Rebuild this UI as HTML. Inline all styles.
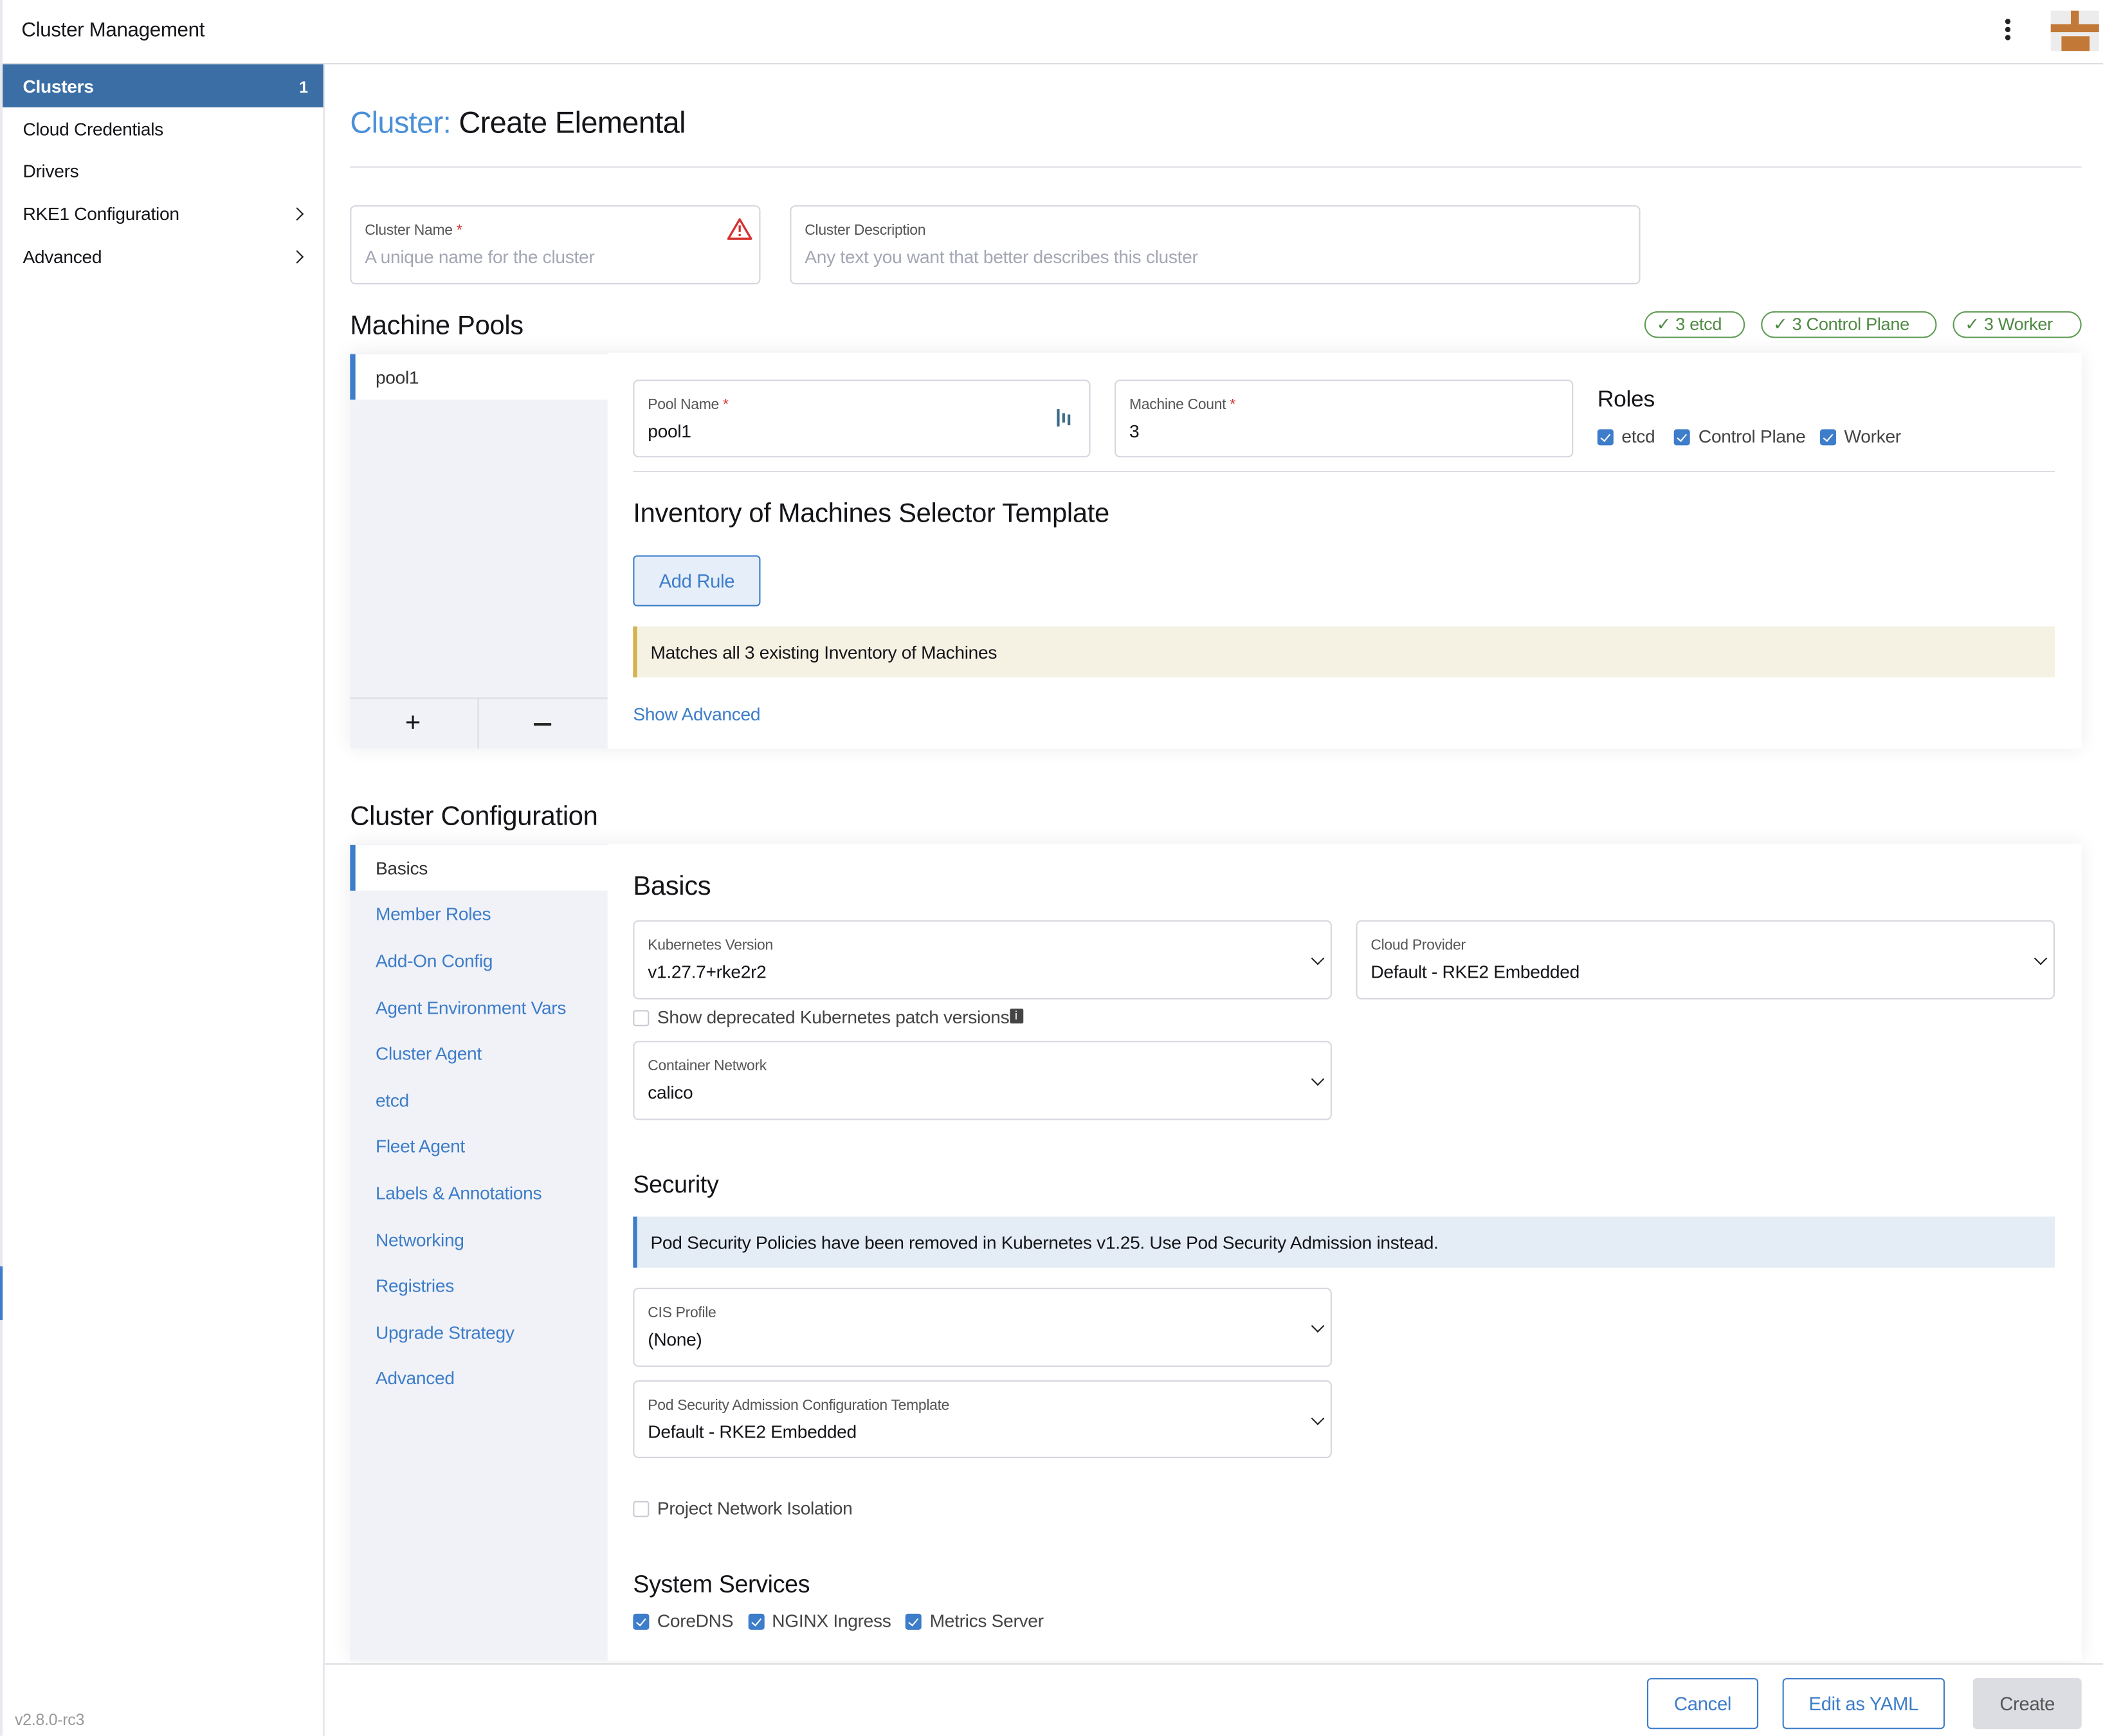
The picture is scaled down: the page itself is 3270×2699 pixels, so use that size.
<!DOCTYPE html>
<html><head><meta charset="utf-8"><style>
*{box-sizing:border-box;margin:0;padding:0}
html,body{width:3270px;height:2698px;overflow:hidden;background:#fff}
#w{position:absolute;left:0;top:0;width:1568px;height:1294px;transform:scale(2.0855);transform-origin:0 0;font-family:"Liberation Sans",sans-serif;color:#141419;font-size:13px;letter-spacing:-0.15px}
.a{position:absolute;white-space:nowrap}
.box{position:absolute;border:1px solid #d5d6de;border-radius:4px;background:#fff}
.lbl{position:absolute;left:10px;top:12px;font-size:11px;color:#555}
.val{position:absolute;left:10px;top:30px;font-size:13.5px}
.ph{color:#a3a6b4}
.req{color:#d63232}
.chev{position:absolute;right:6px;top:24px;width:7px;height:7px;border-right:1.6px solid #222;border-bottom:1.6px solid #222;transform:rotate(45deg)}
.cb{display:inline-block;width:12px;height:12px;border-radius:2px;background:#3d7dca;vertical-align:-2px;margin-right:6px;position:relative}
.cb:after{content:"";position:absolute;left:4px;top:1.5px;width:3px;height:6px;border-right:1.5px solid #fff;border-bottom:1.5px solid #fff;transform:rotate(40deg)}
.cbe{display:inline-block;width:12px;height:12px;border-radius:2px;border:1px solid #c8cad3;vertical-align:-2px;margin-right:6px}
.h2{font-size:20px}
.link{color:#3d7dca}
.tab{position:absolute;left:280px;font-size:13.5px;color:#3d7dca}
.badge{position:absolute;top:232px;height:20px;border:1px solid #5d9a51;border-radius:10px;color:#4f8a44;font-size:13px;line-height:18px;padding:0 9px 0 8px}
.btn{position:absolute;top:1251px;height:38px;border:1px solid #3d7dca;border-radius:3px;color:#3d7dca;font-size:14px;line-height:36px;text-align:center;background:#fff}
</style></head><body><div id="w">
<div class="a" style="left:0;top:0;width:1568px;height:48px;border-bottom:1px solid #dcdde3"></div>
<div class="a" style="left:16px;top:14px;font-size:15px">Cluster Management</div>
<div class="a" style="left:1495px;top:14px;width:4px;height:4px;border-radius:2px;background:#222"></div>
<div class="a" style="left:1495px;top:20px;width:4px;height:4px;border-radius:2px;background:#222"></div>
<div class="a" style="left:1495px;top:26px;width:4px;height:4px;border-radius:2px;background:#222"></div>
<div class="a" style="left:1529px;top:8px;width:36px;height:30px;background:#ececec"></div>
<div class="a" style="left:1529px;top:18px;width:36px;height:6px;background:#c27937"></div>
<div class="a" style="left:1544px;top:8px;width:6px;height:10px;background:#c27937"></div>
<div class="a" style="left:1537px;top:27px;width:21px;height:11px;background:#c27937"></div>
<div class="a" style="left:0;top:0;width:2px;height:1294px;background:#e8e9ee"></div>
<div class="a" style="left:241px;top:48px;width:1px;height:1246px;background:#dcdde3"></div>
<div class="a" style="left:2px;top:48px;width:239px;height:32px;background:#3b6ea5"></div>
<div class="a" style="left:17px;top:57px;font-size:13.5px;color:#fff;font-weight:bold">Clusters</div>
<div class="a" style="left:223px;top:58px;font-size:12px;color:#fff;font-weight:bold">1</div>
<div class="a" style="left:17px;top:89px;font-size:13.5px">Cloud Credentials</div>
<div class="a" style="left:17px;top:120px;font-size:13.5px">Drivers</div>
<div class="a" style="left:17px;top:152px;font-size:13.5px">RKE1 Configuration</div>
<div class="a" style="left:17px;top:184px;font-size:13.5px">Advanced</div>
<div class="a" style="left:218px;top:156px;width:7px;height:7px;border-right:1.5px solid #222;border-top:1.5px solid #222;transform:rotate(45deg)"></div>
<div class="a" style="left:218px;top:188px;width:7px;height:7px;border-right:1.5px solid #222;border-top:1.5px solid #222;transform:rotate(45deg)"></div>
<div class="a" style="left:11px;top:1275px;font-size:12px;color:#999">v2.8.0-rc3</div>
<div class="a" style="left:0;top:944px;width:2px;height:40px;background:#3d7dca"></div>
<div class="a" style="left:261px;top:79px;font-size:22.5px;letter-spacing:-0.3px"><span style="color:#4a90d9">Cluster:</span> Create Elemental</div>
<div class="a" style="left:261px;top:124px;width:1291px;height:1px;background:#dcdde3"></div>
<div class="box" style="left:261px;top:153px;width:306px;height:59px"><div class="lbl">Cluster Name <span class="req">*</span></div><div class="val ph">A unique name for the cluster</div>
<svg class="a" style="left:280px;top:8px" width="19" height="17" viewBox="0 0 19 17"><path d="M9.5 1.5L18 16H1z" fill="none" stroke="#d63232" stroke-width="1.6" stroke-linejoin="round"/><path d="M9.5 6v5M9.5 12.5v1.5" stroke="#d63232" stroke-width="1.6"/></svg></div>
<div class="box" style="left:589px;top:153px;width:634px;height:59px"><div class="lbl">Cluster Description</div><div class="val ph">Any text you want that better describes this cluster</div></div>
<div class="a h2" style="left:261px;top:232px">Machine Pools</div>
<div class="badge" style="left:1226px;width:75px">✓ 3 etcd</div>
<div class="badge" style="left:1313px;width:131px">✓ 3 Control Plane</div>
<div class="badge" style="left:1456px;width:96px">✓ 3 Worker</div>
<div class="a" style="left:261px;top:263px;width:1291px;height:295px;background:#fff;box-shadow:0 0 14px rgba(0,0,0,.08)"></div>
<div class="a" style="left:261px;top:263px;width:192px;height:295px;background:#f1f2f7"></div>
<div class="a" style="left:261px;top:264px;width:192px;height:34px;background:#fff;border-left:4px solid #3d7dca"></div>
<div class="a" style="left:280px;top:274px;font-size:13.5px;color:#333">pool1</div>
<div class="a" style="left:261px;top:520px;width:192px;height:1px;background:#dcdde3"></div>
<div class="a" style="left:356px;top:520px;width:1px;height:38px;background:#dcdde3"></div>
<div class="a" style="left:302px;top:528px;font-size:20px">+</div>
<div class="a" style="left:398px;top:539px;width:13px;height:1.5px;background:#222"></div>
<div class="box" style="left:472px;top:283px;width:341px;height:58px"><div class="lbl">Pool Name <span class="req">*</span></div><div class="val">pool1</div>
<svg class="a" style="left:314px;top:20px" width="12" height="15"><rect x="1" y="1" width="2" height="13" fill="#3d6b88"/><rect x="5" y="4" width="2" height="7" fill="#3d6b88"/><rect x="9" y="5" width="2" height="8" fill="#3d6b88"/></svg></div>
<div class="box" style="left:831px;top:283px;width:342px;height:58px"><div class="lbl">Machine Count <span class="req">*</span></div><div class="val">3</div></div>
<div class="a" style="left:1191px;top:288px;font-size:17px">Roles</div>
<div class="a" style="left:1191px;top:318px;font-size:13.5px;color:#444"><span class="cb"></span>etcd &nbsp;&nbsp;&nbsp;<span class="cb"></span>Control Plane &nbsp;&nbsp;<span class="cb"></span>Worker</div>
<div class="a" style="left:472px;top:351px;width:1060px;height:1px;background:#dcdde3"></div>
<div class="a h2" style="left:472px;top:372px">Inventory of Machines Selector Template</div>
<div class="a" style="left:472px;top:414px;width:95px;height:38px;background:#e5eef9;border:1px solid #3d7dca;border-radius:3px;color:#3d7dca;font-size:14px;line-height:36px;text-align:center">Add Rule</div>
<div class="a" style="left:472px;top:467px;width:1060px;height:38px;background:#f6f2e3;border-left:3px solid #d4b24c"></div>
<div class="a" style="left:485px;top:479px;font-size:13.5px">Matches all 3 existing Inventory of Machines</div>
<div class="a link" style="left:472px;top:525px;font-size:13.5px">Show Advanced</div>
<div class="a h2" style="left:261px;top:598px">Cluster Configuration</div>
<div class="a" style="left:261px;top:629px;width:1291px;height:609px;background:#fff;box-shadow:0 0 14px rgba(0,0,0,.08)"></div>
<div class="a" style="left:261px;top:629px;width:192px;height:609px;background:#f1f2f7"></div>
<div class="a" style="left:261px;top:630px;width:192px;height:34px;background:#fff;border-left:4px solid #3d7dca"></div>
<div class="a" style="left:280px;top:640px;font-size:13.5px;color:#333">Basics</div>
<div class="tab" style="top:674px">Member Roles</div>
<div class="tab" style="top:709px">Add-On Config</div>
<div class="tab" style="top:744px">Agent Environment Vars</div>
<div class="tab" style="top:778px">Cluster Agent</div>
<div class="tab" style="top:813px">etcd</div>
<div class="tab" style="top:847px">Fleet Agent</div>
<div class="tab" style="top:882px">Labels &amp; Annotations</div>
<div class="tab" style="top:917px">Networking</div>
<div class="tab" style="top:951px">Registries</div>
<div class="tab" style="top:986px">Upgrade Strategy</div>
<div class="tab" style="top:1020px">Advanced</div>
<div class="a h2" style="left:472px;top:650px">Basics</div>
<div class="box" style="left:472px;top:686px;width:521px;height:59px"><div class="lbl">Kubernetes Version</div><div class="val">v1.27.7+rke2r2</div><div class="chev"></div></div>
<div class="box" style="left:1011px;top:686px;width:521px;height:59px"><div class="lbl">Cloud Provider</div><div class="val">Default - RKE2 Embedded</div><div class="chev"></div></div>
<div class="a" style="left:472px;top:751px;font-size:13.5px;color:#444"><span class="cbe"></span>Show deprecated Kubernetes patch versions<span style="display:inline-block;width:10px;height:11px;background:#444;color:#fff;font-size:9px;line-height:11px;text-align:center;vertical-align:3px;border-radius:1px">i</span></div>
<div class="box" style="left:472px;top:776px;width:521px;height:59px"><div class="lbl">Container Network</div><div class="val">calico</div><div class="chev"></div></div>
<div class="a" style="left:472px;top:873px;font-size:18px">Security</div>
<div class="a" style="left:472px;top:907px;width:1060px;height:38px;background:#e4edf6;border-left:3px solid #3d7dca"></div>
<div class="a" style="left:485px;top:919px;font-size:13.5px">Pod Security Policies have been removed in Kubernetes v1.25. Use Pod Security Admission instead.</div>
<div class="box" style="left:472px;top:960px;width:521px;height:59px"><div class="lbl">CIS Profile</div><div class="val">(None)</div><div class="chev"></div></div>
<div class="box" style="left:472px;top:1029px;width:521px;height:58px"><div class="lbl">Pod Security Admission Configuration Template</div><div class="val">Default - RKE2 Embedded</div><div class="chev"></div></div>
<div class="a" style="left:472px;top:1117px;font-size:13.5px;color:#444"><span class="cbe"></span>Project Network Isolation</div>
<div class="a" style="left:472px;top:1171px;font-size:18px">System Services</div>
<div class="a" style="left:472px;top:1201px;font-size:13.5px;color:#444"><span class="cb"></span>CoreDNS &nbsp;&nbsp;<span class="cb"></span>NGINX Ingress &nbsp;&nbsp;<span class="cb"></span>Metrics Server</div>
<div class="a" style="left:242px;top:1240px;width:1326px;height:54px;background:#fff;border-top:1px solid #dcdde3"></div>
<div class="btn" style="left:1228px;width:83px">Cancel</div>
<div class="btn" style="left:1329px;width:121px">Edit as YAML</div>
<div class="btn" style="left:1471px;width:81px;background:#dcdde3;border-color:#dcdde3;color:#555">Create</div>
</div></body></html>
